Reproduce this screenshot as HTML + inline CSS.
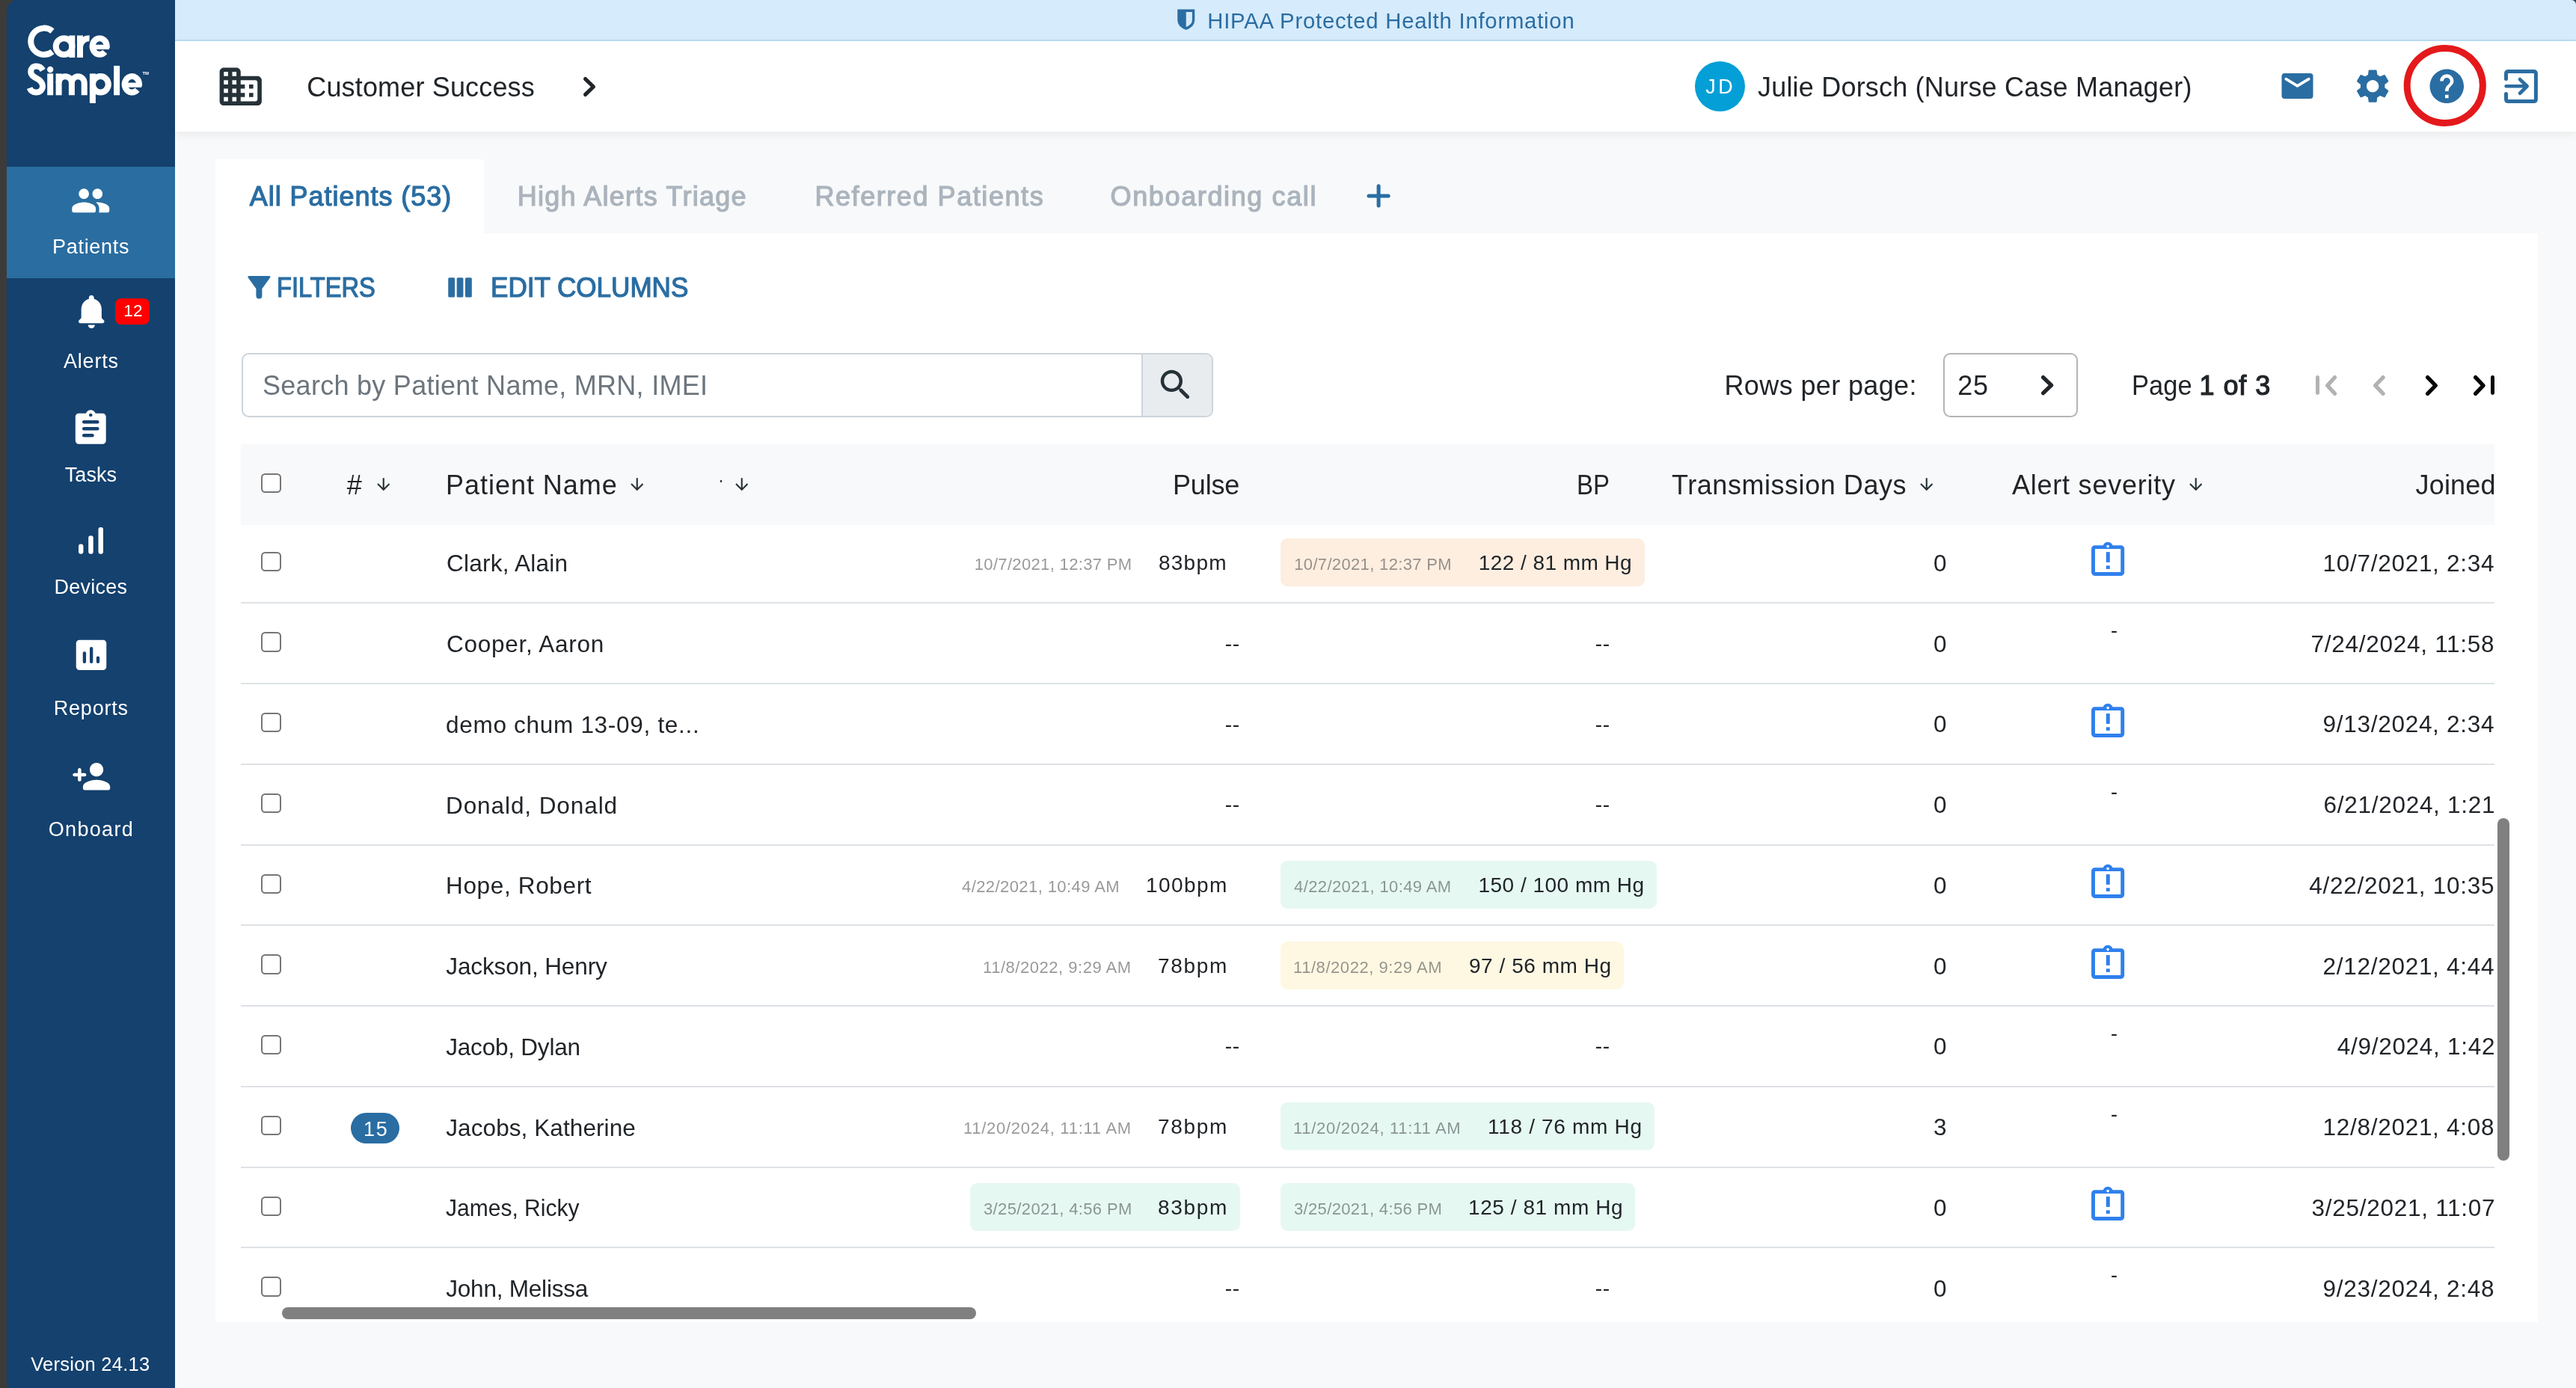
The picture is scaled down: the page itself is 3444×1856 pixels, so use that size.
<!DOCTYPE html>
<html lang="en"><head><meta charset="utf-8"><title>CareSimple - Patients</title>
<style>
html,body{margin:0;padding:0}
body{width:3444px;height:1856px;overflow:hidden;position:relative;background:#f8f9fa;font-family:"Liberation Sans", sans-serif;color:#212529}
div,svg,.t{position:absolute}
svg{overflow:visible}
.t{white-space:nowrap;line-height:1}
.layer{left:0;top:0;width:3444px;height:1856px;will-change:transform}
</style></head>
<body>
<div style="left:0px;top:0px;width:30px;height:1856px;background:#3c3b3a"></div>
<div style="left:3424px;top:0px;width:20px;height:20px;background:#3b3b3b"></div>
<div style="left:9px;top:-2px;width:225px;height:1858px;background:#14416e;border-top-left-radius:18px"></div>
<div style="left:9px;top:223px;width:225px;height:149px;background:#2a6da0"></div>
<div style="left:234px;top:0px;width:3210px;height:53px;background:#d6ebfb;border-bottom:2px solid #badcf6;border-top-right-radius:6px"></div>
<div style="left:234px;top:55px;width:3210px;height:121px;background:#fff;box-shadow:0 4px 12px rgba(0,0,0,.06)"></div>
<div style="left:288px;top:311.5px;width:3105px;height:1456px;background:#fff"></div>
<div style="left:288px;top:213px;width:359px;height:100px;background:#fff"></div>
<svg style="left:0px;top:0px;" width="234" height="150" viewBox="0 0 234 150"><g fill="none" stroke="#fff" stroke-width="8" stroke-linecap="butt" stroke-linejoin="round"><path d="M70.04,41.54 A17.7,17.7 0 1 0 70.04,69.06"/><circle cx="85.6" cy="62.1" r="10.9"/><path d="M96.3,47.4 V77"/><path d="M107,47.4 V77"/><path d="M107,63 A12.2,12 0 0 1 119.6,51.2"/><path d="M142.80,64.20 V62.00 A9.6,10.8 0 1 0 140.22,69.37"/><path stroke-width="6.3" d="M123.60,62.90 H146.00"/><path d="M57.2,94 C55,90 51.5,88.6 48.4,88.6 C43.5,88.6 41.2,92.2 41.2,95.8 C41.2,100.8 45,102.8 49,104.8 C54,107.3 57,110 57,115.3 C57,120.3 53,123.5 48.4,123.5 C44,123.5 41,121.3 39.6,117.6"/><path d="M67.2,98.4 V127.3"/><circle cx="67.2" cy="93" r="4.2" fill="#fff" stroke="none"/><path d="M78.6,98.4 V127.3"/><path d="M78.6,111 A8.65,8.8 0 0 1 95.9,111 V127.3"/><path d="M95.9,111 A8.4,8.8 0 0 1 112.7,111 V127.3"/><path d="M123.9,98.4 V138"/><ellipse cx="134.4" cy="112.8" rx="10.4" ry="10.7"/><path d="M156.1,87.9 V127.3"/><path d="M186.10,115.00 V112.80 A9.7,10.7 0 1 0 183.49,120.10"/><path stroke-width="6.3" d="M166.70,113.70 H189.30"/></g></svg>
<svg style="left:94.4px;top:241.15px;" width="54.5" height="54.5" viewBox="0 0 24 24"><path fill="#fff" d="M16 11c1.66 0 2.99-1.34 2.99-3S17.66 5 16 5c-1.66 0-3 1.34-3 3s1.34 3 3 3zm-8 0c1.66 0 2.99-1.34 2.99-3S9.66 5 8 5C6.34 5 5 6.34 5 8s1.34 3 3 3zm0 2c-2.33 0-7 1.17-7 3.5V18c0 .55.45 1 1 1h12c.55 0 1-.45 1-1v-1.5c0-2.33-4.67-3.5-7-3.5zm8 0c-.29 0-.62.02-.97.05.02.01.03.03.04.04 1.14.83 1.93 1.94 1.93 3.41V18c0 .35-.07.69-.18 1H22c.55 0 1-.45 1-1v-1.5c0-2.33-4.67-3.5-7-3.5z"/></svg>
<svg style="left:94.65px;top:389.3px;" width="54.5" height="54.5" viewBox="0 0 24 24"><path fill="#fff" d="M12 22c1.1 0 2-.9 2-2h-4c0 1.1.89 2 2 2zm6-6v-5c0-3.07-1.64-5.64-4.5-6.32V4c0-.83-.67-1.5-1.5-1.5s-1.5.67-1.5 1.5v.68C7.63 5.36 6 7.92 6 11v5l-1.29 1.29c-.63.63-.19 1.71.7 1.71h13.17c.89 0 1.34-1.08.71-1.71L18 16z"/></svg>
<div style="left:154px;top:399px;width:46px;height:34.75px;background:#ff0000;border-radius:8px"></div>
<svg style="left:94.15px;top:545.7px;" width="54.5" height="54.5" viewBox="0 0 24 24"><path fill="#fff" d="M19 3h-4.18C14.4 1.84 13.3 1 12 1c-1.3 0-2.4.84-2.82 2H5c-1.1 0-2 .9-2 2v14c0 1.1.9 2 2 2h14c1.1 0 2-.9 2-2V5c0-1.1-.9-2-2-2zm-7 0c.55 0 1 .45 1 1s-.45 1-1 1-1-.45-1-1 .45-1 1-1zm1 14H8c-.55 0-1-.45-1-1s.45-1 1-1h5c.55 0 1 .45 1 1s-.45 1-1 1zm3-4H8c-.55 0-1-.45-1-1s.45-1 1-1h8c.55 0 1 .45 1 1s-.45 1-1 1zm0-4H8c-.55 0-1-.45-1-1s.45-1 1-1h8c.55 0 1 .45 1 1s-.45 1-1 1z"/></svg>
<svg style="left:100px;top:700px;" width="50" height="45" viewBox="0 0 50 45"><g fill="#fff"><rect x="5" y="27.5" width="6.4" height="13.25" rx="3"/><rect x="18.2" y="16.25" width="6.5" height="24.5" rx="3"/><rect x="31.5" y="5" width="6.5" height="35.75" rx="3"/></g></svg>
<svg style="left:100px;top:850px;" width="50" height="50" viewBox="0 0 50 50"><rect x="1.75" y="5.75" width="40.5" height="40.25" rx="4.5" fill="#fff"/><g fill="#14416e"><rect x="10.75" y="21.25" width="4.3" height="15.75" rx="2.1"/><rect x="20" y="15" width="4.3" height="22" rx="2.1"/><rect x="28.85" y="27.5" width="4.3" height="9.5" rx="2.1"/></g></svg>
<svg style="left:94.7px;top:1010.9px;" width="54.5" height="54.5" viewBox="0 0 24 24"><path fill="#fff" d="M15 12c2.21 0 4-1.79 4-4s-1.79-4-4-4-4 1.79-4 4 1.79 4 4 4zm-9-2V8c0-.55-.45-1-1-1s-1 .45-1 1v2H2c-.55 0-1 .45-1 1s.45 1 1 1h2v2c0 .55.45 1 1 1s1-.45 1-1v-2h2c.55 0 1-.45 1-1s-.45-1-1-1H6zm9 4c-2.67 0-8 1.34-8 4v1c0 .55.45 1 1 1h14c.55 0 1-.45 1-1v-1c0-2.66-5.33-4-8-4z"/></svg>
<svg style="left:1570px;top:8px;" width="32" height="36" viewBox="0 0 32 36"><path fill="#2a6da2" d="M4.25,4.5 H27.25 V19 Q27.25,27.5 15.75,32 Q4.25,27.5 4.25,19 Z"/><path fill="#d6ebfb" d="M15.75,8 H23.9 V19 Q23.9,24.6 15.75,28.3 Z"/></svg>
<svg style="left:288.1px;top:82.06px;" width="67.5" height="67.5" viewBox="0 0 24 24"><path fill="#263238" d="M12 7V5c0-1.1-.9-2-2-2H4c-1.1 0-2 .9-2 2v14c0 1.1.9 2 2 2h16c1.1 0 2-.9 2-2V9c0-1.1-.9-2-2-2h-8zM6 19H4v-2h2v2zm0-4H4v-2h2v2zm0-4H4V9h2v2zm0-4H4V5h2v2zm4 12H8v-2h2v2zm0-4H8v-2h2v2zm0-4H8V9h2v2zm0-4H8V5h2v2zm9 12h-7v-2h2v-2h-2v-2h2v-2h-2V9h7c.55 0 1 .45 1 1v8c0 .55-.45 1-1 1zm-1-8h-2v2h2v-2zm0 4h-2v2h2v-2z"/></svg>
<svg style="left:779.8px;top:103px;" width="16" height="26" viewBox="0 0 16 26"><polyline points="2.6,2.6 13.4,13 2.6,23.4" fill="none" stroke="#212529" stroke-width="5.2" stroke-linecap="round" stroke-linejoin="round"/></svg>
<div style="left:2266px;top:82px;width:67px;height:67px;background:#039fd6;border-radius:50%"></div>
<svg style="left:3046px;top:94px;" width="50" height="42" viewBox="0 0 50 42"><rect x="4.5" y="4" width="42" height="34" rx="4" fill="#2a6da2"/><polyline points="10.3,11.6 25.5,20.9 40.8,11.6" fill="none" stroke="#fff" stroke-width="3.6" stroke-linecap="round" stroke-linejoin="round"/></svg>
<svg style="left:3145.35px;top:87.85px;" width="54.3" height="54.3" viewBox="0 0 24 24"><path fill="#2a6da2" d="M19.14 12.94c.04-.3.06-.61.06-.94 0-.32-.02-.64-.07-.94l2.03-1.58c.18-.14.23-.41.12-.61l-1.92-3.32c-.12-.22-.37-.29-.59-.22l-2.39.96c-.5-.38-1.03-.7-1.62-.94l-.36-2.54c-.04-.24-.24-.41-.48-.41h-3.84c-.24 0-.43.17-.47.41l-.36 2.54c-.59.24-1.13.57-1.62.94l-2.39-.96c-.22-.08-.47 0-.59.22L2.74 8.87c-.12.21-.08.47.12.61l2.03 1.58c-.05.3-.09.63-.09.94s.02.64.07.94l-2.03 1.58c-.18.14-.23.41-.12.61l1.92 3.32c.12.22.37.29.59.22l2.39-.96c.5.38 1.03.7 1.62.94l.36 2.54c.05.24.24.41.48.41h3.84c.24 0 .44-.17.47-.41l.36-2.54c.59-.24 1.13-.56 1.62-.94l2.39.96c.22.08.47 0 .59-.22l1.92-3.32c.12-.22.07-.47-.12-.61l-2.01-1.58zM12 15.6c-1.98 0-3.6-1.62-3.6-3.6s1.62-3.6 3.6-3.6 3.6 1.62 3.6 3.6-1.62 3.6-3.6 3.6z"/></svg>
<svg style="left:3244.2px;top:87.95px;" width="54.6" height="54.6" viewBox="0 0 24 24"><path fill="#2a6da2" d="M12 2C6.48 2 2 6.48 2 12s4.48 10 10 10 10-4.48 10-10S17.52 2 12 2zm1 17h-2v-2h2v2zm2.07-7.75l-.9.92C13.45 12.9 13 13.5 13 15h-2v-.5c0-1.1.45-2.1 1.17-2.83l1.24-1.26c.37-.36.59-.86.59-1.41 0-1.1-.9-2-2-2s-2 .9-2 2H8c0-2.21 1.79-4 4-4s4 1.79 4 4c0 .88-.36 1.68-.93 2.25z"/></svg>
<svg style="left:3208px;top:54px;" width="122" height="122" viewBox="0 0 122 122"><ellipse cx="60.75" cy="60.4" rx="50.6" ry="50" fill="none" stroke="#e4191c" stroke-width="9"/></svg>
<svg style="left:3340px;top:86px;" width="60" height="58" viewBox="0 0 60 58"><g fill="none" stroke="#2a6da2" stroke-linecap="round" stroke-linejoin="round"><path stroke-width="5" d="M10.5,19.4 V12.6 Q10.5,9.56 13.5,9.56 H47.4 Q50.4,9.56 50.4,12.6 V46.4 Q50.4,49.4 47.4,49.4 H13.5 Q10.5,49.4 10.5,46.4 V39.5"/><path stroke-width="4.5" d="M10.6,29.26 H37"/><path stroke-width="4.7" d="M29,20.1 L38.6,29.3 L29,38.7"/></g></svg>
<svg style="left:1823px;top:242px;" width="40" height="40" viewBox="0 0 40 40"><path d="M7,19.9 H33.2 M20.1,6.8 V33" fill="none" stroke="#2a6da2" stroke-width="5" stroke-linecap="round"/></svg>
<svg style="left:328px;top:366px;" width="38" height="38" viewBox="0 0 38 38"><path fill="#2a6da2" d="M5.4,2.9 H31.4 Q34.8,2.9 32.9,5.6 L22.4,20 V29.4 A4,4 0 0 1 14.4,29.4 V20 L3.9,5.6 Q2,2.9 5.4,2.9 Z"/></svg>
<svg style="left:596px;top:368px;" width="38" height="34" viewBox="0 0 38 34"><g fill="#2a6da2"><rect x="3.25" y="3.25" width="8.8" height="26.25" rx="1.6"/><rect x="14.7" y="3.25" width="8.7" height="26.25" rx="1.6"/><rect x="26" y="3.25" width="8.8" height="26.25" rx="1.6"/></g></svg>
<div style="left:322.5px;top:472px;width:1299.5px;height:86px;background:#fff;border:2px solid #cdd4db;border-radius:9.5px;box-sizing:border-box"></div>
<div style="left:1526px;top:474px;width:94px;height:82px;background:#e9ecef;border-left:2px solid #cdd4db;border-radius:0 7.5px 7.5px 0;box-sizing:border-box"></div>
<svg style="left:1545.3px;top:487.6px;" width="54" height="54" viewBox="0 0 24 24"><path fill="#263238" d="M15.5 14h-.79l-.28-.27C15.41 12.59 16 11.11 16 9.5 16 5.91 13.09 3 9.5 3S3 5.91 3 9.5 5.91 16 9.5 16c1.61 0 3.09-.59 4.23-1.57l.27.28v.79l4.25 4.25c.41.41 1.08.41 1.49 0 .41-.41.41-1.08 0-1.49L15.5 14zm-6 0C7.01 14 5 11.99 5 9.5S7.01 5 9.5 5 14 7.01 14 9.5 11.99 14 9.5 14z"/></svg>
<div style="left:2598.25px;top:472px;width:179.25px;height:86px;background:#fff;border:2px solid #b3b5b6;border-radius:9.5px;box-sizing:border-box"></div>
<svg style="left:2728.6px;top:501.7px;" width="16.2" height="26.3" viewBox="0 0 16.2 26.3"><polyline points="2.65,2.65 13.55,13.15 2.65,23.65" fill="none" stroke="#212529" stroke-width="5.3" stroke-linecap="round" stroke-linejoin="round"/></svg>
<div style="left:3096.3px;top:501.5px;width:4.7px;height:26.5px;background:#b2b2b2;border-radius:2.4px"></div>
<svg style="left:3108.9px;top:501.5px;" width="15.1" height="27" viewBox="0 0 15.1 27"><polyline points="12.45,2.65 2.65,13.5 12.45,24.35" fill="none" stroke="#b2b2b2" stroke-width="5.3" stroke-linecap="round" stroke-linejoin="round"/></svg>
<svg style="left:3172.5px;top:501.5px;" width="15.7" height="27" viewBox="0 0 15.7 27"><polyline points="13.05,2.65 2.65,13.5 13.05,24.35" fill="none" stroke="#b2b2b2" stroke-width="5.3" stroke-linecap="round" stroke-linejoin="round"/></svg>
<svg style="left:3243px;top:501.5px;" width="15.9" height="27" viewBox="0 0 15.9 27"><polyline points="2.65,2.65 13.25,13.5 2.65,24.35" fill="none" stroke="#050505" stroke-width="5.3" stroke-linecap="round" stroke-linejoin="round"/></svg>
<svg style="left:3307px;top:501.5px;" width="15.7" height="27" viewBox="0 0 15.7 27"><polyline points="2.65,2.65 13.05,13.5 2.65,24.35" fill="none" stroke="#050505" stroke-width="5.3" stroke-linecap="round" stroke-linejoin="round"/></svg>
<div style="left:3329.8px;top:501.5px;width:4.8px;height:26.5px;background:#050505;border-radius:2.4px"></div>
<div style="left:322px;top:594.25px;width:3013px;height:107.25px;background:#f8f9fa"></div>
<div style="left:322px;top:805.25px;width:3013px;height:2px;background:#dee2e6"></div>
<div style="left:322px;top:913px;width:3013px;height:2px;background:#dee2e6"></div>
<div style="left:322px;top:1020.75px;width:3013px;height:2px;background:#dee2e6"></div>
<div style="left:322px;top:1128.5px;width:3013px;height:2px;background:#dee2e6"></div>
<div style="left:322px;top:1236.25px;width:3013px;height:2px;background:#dee2e6"></div>
<div style="left:322px;top:1344px;width:3013px;height:2px;background:#dee2e6"></div>
<div style="left:322px;top:1451.75px;width:3013px;height:2px;background:#dee2e6"></div>
<div style="left:322px;top:1559.5px;width:3013px;height:2px;background:#dee2e6"></div>
<div style="left:322px;top:1667.25px;width:3013px;height:2px;background:#dee2e6"></div>
<div style="left:349.25px;top:632.5px;width:26.5px;height:26.4px;background:#fff;border:2px solid #767676;border-radius:5.5px;box-sizing:border-box"></div>
<div style="left:349.25px;top:737.5px;width:26.5px;height:26.4px;background:#fff;border:2px solid #767676;border-radius:5.5px;box-sizing:border-box"></div>
<div style="left:349.25px;top:845.25px;width:26.5px;height:26.4px;background:#fff;border:2px solid #767676;border-radius:5.5px;box-sizing:border-box"></div>
<div style="left:349.25px;top:953px;width:26.5px;height:26.4px;background:#fff;border:2px solid #767676;border-radius:5.5px;box-sizing:border-box"></div>
<div style="left:349.25px;top:1060.75px;width:26.5px;height:26.4px;background:#fff;border:2px solid #767676;border-radius:5.5px;box-sizing:border-box"></div>
<div style="left:349.25px;top:1168.5px;width:26.5px;height:26.4px;background:#fff;border:2px solid #767676;border-radius:5.5px;box-sizing:border-box"></div>
<div style="left:349.25px;top:1276.25px;width:26.5px;height:26.4px;background:#fff;border:2px solid #767676;border-radius:5.5px;box-sizing:border-box"></div>
<div style="left:349.25px;top:1384px;width:26.5px;height:26.4px;background:#fff;border:2px solid #767676;border-radius:5.5px;box-sizing:border-box"></div>
<div style="left:349.25px;top:1491.75px;width:26.5px;height:26.4px;background:#fff;border:2px solid #767676;border-radius:5.5px;box-sizing:border-box"></div>
<div style="left:349.25px;top:1599.5px;width:26.5px;height:26.4px;background:#fff;border:2px solid #767676;border-radius:5.5px;box-sizing:border-box"></div>
<div style="left:349.25px;top:1707.25px;width:26.5px;height:26.4px;background:#fff;border:2px solid #767676;border-radius:5.5px;box-sizing:border-box"></div>
<svg style="left:500.25px;top:635.25px;" width="25.5" height="25.5" viewBox="0 0 24 24"><path fill="#263238" d="M20 12l-1.41-1.41L13 16.17V4h-2v12.17l-5.58-5.59L4 12l8 8 8-8z"/></svg>
<svg style="left:839px;top:635.25px;" width="25.5" height="25.5" viewBox="0 0 24 24"><path fill="#263238" d="M20 12l-1.41-1.41L13 16.17V4h-2v12.17l-5.58-5.59L4 12l8 8 8-8z"/></svg>
<svg style="left:979px;top:635.25px;" width="25.5" height="25.5" viewBox="0 0 24 24"><path fill="#263238" d="M20 12l-1.41-1.41L13 16.17V4h-2v12.17l-5.58-5.59L4 12l8 8 8-8z"/></svg>
<svg style="left:2562.75px;top:635.25px;" width="25.5" height="25.5" viewBox="0 0 24 24"><path fill="#263238" d="M20 12l-1.41-1.41L13 16.17V4h-2v12.17l-5.58-5.59L4 12l8 8 8-8z"/></svg>
<svg style="left:2922.75px;top:635.25px;" width="25.5" height="25.5" viewBox="0 0 24 24"><path fill="#263238" d="M20 12l-1.41-1.41L13 16.17V4h-2v12.17l-5.58-5.59L4 12l8 8 8-8z"/></svg>
<div style="left:962.5px;top:641.75px;width:2px;height:3.25px;background:#263238"></div>
<div style="left:1712px;top:720px;width:486.75px;height:64px;background:#fdeee0;border-radius:9px"></div>
<div style="left:1712px;top:1151px;width:503px;height:64px;background:#e6f8f2;border-radius:9px"></div>
<div style="left:1712px;top:1258.75px;width:459px;height:64px;background:#fef8e3;border-radius:9px"></div>
<div style="left:1712px;top:1474.25px;width:500px;height:64px;background:#e6f8f2;border-radius:9px"></div>
<div style="left:1296.5px;top:1582px;width:361.5px;height:64px;background:#e6f8f2;border-radius:9px"></div>
<div style="left:1712px;top:1582px;width:474px;height:64px;background:#e6f8f2;border-radius:9px"></div>
<div style="left:468.75px;top:1488px;width:65.5px;height:40.75px;background:#2a6da2;border-radius:21px"></div>
<svg style="left:2792px;top:723px;" width="52" height="50" viewBox="0 0 52 50"><circle cx="26.1" cy="8.5" r="6.8" fill="#2f80ed"/><rect x="6.53" y="8.65" width="39.18" height="35.8" rx="2.1" fill="#fff" stroke="#2f80ed" stroke-width="4.9"/><circle cx="26.1" cy="7.6" r="1.8" fill="#fff"/><rect x="23.8" y="15.1" width="5" height="13.8" fill="#2f80ed"/><rect x="23.8" y="33.3" width="5" height="4.6" fill="#2f80ed"/></svg>
<svg style="left:2792px;top:938.5px;" width="52" height="50" viewBox="0 0 52 50"><circle cx="26.1" cy="8.5" r="6.8" fill="#2f80ed"/><rect x="6.53" y="8.65" width="39.18" height="35.8" rx="2.1" fill="#fff" stroke="#2f80ed" stroke-width="4.9"/><circle cx="26.1" cy="7.6" r="1.8" fill="#fff"/><rect x="23.8" y="15.1" width="5" height="13.8" fill="#2f80ed"/><rect x="23.8" y="33.3" width="5" height="4.6" fill="#2f80ed"/></svg>
<svg style="left:2792px;top:1154px;" width="52" height="50" viewBox="0 0 52 50"><circle cx="26.1" cy="8.5" r="6.8" fill="#2f80ed"/><rect x="6.53" y="8.65" width="39.18" height="35.8" rx="2.1" fill="#fff" stroke="#2f80ed" stroke-width="4.9"/><circle cx="26.1" cy="7.6" r="1.8" fill="#fff"/><rect x="23.8" y="15.1" width="5" height="13.8" fill="#2f80ed"/><rect x="23.8" y="33.3" width="5" height="4.6" fill="#2f80ed"/></svg>
<svg style="left:2792px;top:1261.75px;" width="52" height="50" viewBox="0 0 52 50"><circle cx="26.1" cy="8.5" r="6.8" fill="#2f80ed"/><rect x="6.53" y="8.65" width="39.18" height="35.8" rx="2.1" fill="#fff" stroke="#2f80ed" stroke-width="4.9"/><circle cx="26.1" cy="7.6" r="1.8" fill="#fff"/><rect x="23.8" y="15.1" width="5" height="13.8" fill="#2f80ed"/><rect x="23.8" y="33.3" width="5" height="4.6" fill="#2f80ed"/></svg>
<svg style="left:2792px;top:1585px;" width="52" height="50" viewBox="0 0 52 50"><circle cx="26.1" cy="8.5" r="6.8" fill="#2f80ed"/><rect x="6.53" y="8.65" width="39.18" height="35.8" rx="2.1" fill="#fff" stroke="#2f80ed" stroke-width="4.9"/><circle cx="26.1" cy="7.6" r="1.8" fill="#fff"/><rect x="23.8" y="15.1" width="5" height="13.8" fill="#2f80ed"/><rect x="23.8" y="33.3" width="5" height="4.6" fill="#2f80ed"/></svg>
<div style="left:3339px;top:1094px;width:16px;height:457.5px;background:#808080;border-radius:8px"></div>
<div style="left:377px;top:1748px;width:928px;height:16px;background:#808080;border-radius:8px"></div>
<div class="layer">
<span class="t" style="left:70.00px;top:317px;font-size:27px;color:#ffffff;letter-spacing:0.706px;">Patients</span>
<span class="t" style="left:85.00px;top:470px;font-size:27px;color:#ffffff;letter-spacing:0.797px;">Alerts</span>
<span class="t" style="left:86.75px;top:622px;font-size:27px;color:#ffffff;letter-spacing:0.058px;">Tasks</span>
<span class="t" style="left:72.50px;top:772px;font-size:27px;color:#ffffff;letter-spacing:0.245px;">Devices</span>
<span class="t" style="left:71.75px;top:934px;font-size:27px;color:#ffffff;letter-spacing:0.785px;">Reports</span>
<span class="t" style="left:64.75px;top:1096px;font-size:27px;color:#ffffff;letter-spacing:1.324px;">Onboard</span>
<span class="t" style="left:41.25px;top:1812px;font-size:25.5px;color:#ffffff;letter-spacing:0.248px;">Version 24.13</span>
<span class="t" style="left:165.25px;top:405px;font-size:22.5px;color:#ffffff;letter-spacing:0.237px;">12</span>
<span class="t" style="left:190.50px;top:95px;font-size:6px;font-weight:700;color:#ffffff;letter-spacing:-0.165px;">TM</span>
<span class="t" style="left:1614.25px;top:14px;font-size:29.25px;color:#2a6da2;letter-spacing:0.787px;">HIPAA Protected Health Information</span>
<span class="t" style="left:410.25px;top:99px;font-size:36px;letter-spacing:0.160px;">Customer Success</span>
<span class="t" style="left:2350.00px;top:99px;font-size:36px;letter-spacing:0.196px;">Julie Dorsch (Nurse Case Manager)</span>
<span class="t" style="left:2280.20px;top:103px;font-size:27px;color:#ffffff;">J</span>
<span class="t" style="left:2297.20px;top:103px;font-size:27px;color:#ffffff;">D</span>
<span class="t" style="left:333.75px;top:245px;font-size:36px;color:#2a6da2;letter-spacing:0.961px;-webkit-text-stroke:1.22px #2a6da2;">All Patients (53)</span>
<span class="t" style="left:691.75px;top:245px;font-size:36px;color:#abb4bd;letter-spacing:1.280px;-webkit-text-stroke:1.22px #abb4bd;">High Alerts Triage</span>
<span class="t" style="left:1089.40px;top:245px;font-size:36px;color:#abb4bd;letter-spacing:1.572px;-webkit-text-stroke:1.22px #abb4bd;">Referred Patients</span>
<span class="t" style="left:1484.60px;top:245px;font-size:36px;color:#abb4bd;letter-spacing:1.624px;-webkit-text-stroke:1.22px #abb4bd;">Onboarding call</span>
<span class="t" style="left:369.94px;top:367px;font-size:36px;color:#2a6da2;-webkit-text-stroke:1.22px #2a6da2;transform:scaleX(0.9063);transform-origin:0 0;">FILTERS</span>
<span class="t" style="left:655.55px;top:367px;font-size:36px;color:#2a6da2;-webkit-text-stroke:1.22px #2a6da2;transform:scaleX(0.9739);transform-origin:0 0;">EDIT COLUMNS</span>
<span class="t" style="left:351.00px;top:498px;font-size:36px;color:#6c757d;letter-spacing:0.275px;">Search by Patient Name, MRN, IMEI</span>
<span class="t" style="left:2305.50px;top:498px;font-size:36px;letter-spacing:0.374px;">Rows per page:</span>
<span class="t" style="left:2617.25px;top:498px;font-size:36px;letter-spacing:0.729px;">25</span>
<span class="t" style="left:2849.83px;top:498px;font-size:36px;transform:scaleX(0.9592);transform-origin:0 0;">Page</span>
<span class="t" style="left:2940.50px;top:498px;font-size:36px;letter-spacing:0.940px;-webkit-text-stroke:1.22px #212529;">1 of 3</span>
<span class="t" style="left:463.75px;top:631px;font-size:36px;">#</span>
<span class="t" style="left:596.00px;top:631px;font-size:36px;letter-spacing:0.969px;">Patient Name</span>
<span class="t" style="left:1568.00px;top:631px;font-size:36px;letter-spacing:-0.195px;">Pulse</span>
<span class="t" style="left:2108.17px;top:631px;font-size:36px;transform:scaleX(0.9164);transform-origin:0 0;">BP</span>
<span class="t" style="left:2235.00px;top:631px;font-size:36px;letter-spacing:0.548px;">Transmission Days</span>
<span class="t" style="left:2690.00px;top:631px;font-size:36px;letter-spacing:0.765px;">Alert severity</span>
<span class="t" style="left:3229.50px;top:631px;font-size:36px;letter-spacing:0.188px;">Joined</span>
<span class="t" style="left:597.00px;top:738px;font-size:31.5px;letter-spacing:0.247px;">Clark, Alain</span>
<span class="t" style="left:597.00px;top:846px;font-size:31.5px;letter-spacing:0.740px;">Cooper, Aaron</span>
<span class="t" style="left:596.00px;top:954px;font-size:31.5px;letter-spacing:0.706px;">demo chum 13-09, te...</span>
<span class="t" style="left:596.00px;top:1062px;font-size:31.5px;letter-spacing:0.921px;">Donald, Donald</span>
<span class="t" style="left:596.00px;top:1169px;font-size:31.5px;letter-spacing:0.654px;">Hope, Robert</span>
<span class="t" style="left:596.25px;top:1277px;font-size:31.5px;letter-spacing:-0.122px;">Jackson, Henry</span>
<span class="t" style="left:596.25px;top:1385px;font-size:31.5px;letter-spacing:-0.211px;">Jacob, Dylan</span>
<span class="t" style="left:596.25px;top:1493px;font-size:31.5px;letter-spacing:0.085px;">Jacobs, Katherine</span>
<span class="t" style="left:596.25px;top:1600px;font-size:31.5px;transform:scaleX(0.9532);transform-origin:0 0;">James, Ricky</span>
<span class="t" style="left:596.25px;top:1708px;font-size:31.5px;letter-spacing:-0.214px;">John, Melissa</span>
<span class="t" style="left:1302.75px;top:744px;font-size:22px;color:rgba(33,37,41,.47);letter-spacing:0.337px;">10/7/2021, 12:37 PM</span>
<span class="t" style="left:1549.00px;top:739px;font-size:28px;letter-spacing:1.240px;">83bpm</span>
<span class="t" style="left:1730.25px;top:744px;font-size:22px;color:rgba(33,37,41,.47);letter-spacing:0.337px;">10/7/2021, 12:37 PM</span>
<span class="t" style="left:1976.75px;top:739px;font-size:28px;letter-spacing:0.433px;">122 / 81 mm Hg</span>
<span class="t" style="left:2585.10px;top:738px;font-size:31.5px;">0</span>
<span class="t" style="left:3105.50px;top:738px;font-size:31.5px;letter-spacing:0.720px;">10/7/2021, 2:34</span>
<span class="t" style="left:1637.75px;top:847px;font-size:28px;letter-spacing:0.676px;">--</span>
<span class="t" style="left:2132.75px;top:847px;font-size:28px;letter-spacing:0.676px;">--</span>
<span class="t" style="left:2585.10px;top:846px;font-size:31.5px;">0</span>
<span class="t" style="left:3089.59px;top:846px;font-size:31.5px;letter-spacing:0.720px;">7/24/2024, 11:58</span>
<span class="t" style="left:2822.00px;top:830px;font-size:27px;">-</span>
<span class="t" style="left:1637.75px;top:955px;font-size:28px;letter-spacing:0.676px;">--</span>
<span class="t" style="left:2132.75px;top:955px;font-size:28px;letter-spacing:0.676px;">--</span>
<span class="t" style="left:2585.10px;top:953px;font-size:31.5px;">0</span>
<span class="t" style="left:3105.50px;top:953px;font-size:31.5px;letter-spacing:0.720px;">9/13/2024, 2:34</span>
<span class="t" style="left:1637.75px;top:1062px;font-size:28px;letter-spacing:0.676px;">--</span>
<span class="t" style="left:2132.75px;top:1062px;font-size:28px;letter-spacing:0.676px;">--</span>
<span class="t" style="left:2585.10px;top:1061px;font-size:31.5px;">0</span>
<span class="t" style="left:3106.50px;top:1061px;font-size:31.5px;letter-spacing:0.720px;">6/21/2024, 1:21</span>
<span class="t" style="left:2822.00px;top:1046px;font-size:27px;">-</span>
<span class="t" style="left:1286.00px;top:1175px;font-size:22px;color:rgba(33,37,41,.47);letter-spacing:0.420px;">4/22/2021, 10:49 AM</span>
<span class="t" style="left:1532.00px;top:1170px;font-size:28px;letter-spacing:1.428px;">100bpm</span>
<span class="t" style="left:1730.00px;top:1175px;font-size:22px;color:rgba(33,37,41,.47);letter-spacing:0.392px;">4/22/2021, 10:49 AM</span>
<span class="t" style="left:1976.50px;top:1170px;font-size:28px;letter-spacing:0.486px;">150 / 100 mm Hg</span>
<span class="t" style="left:2585.10px;top:1169px;font-size:31.5px;">0</span>
<span class="t" style="left:3087.26px;top:1169px;font-size:31.5px;letter-spacing:0.720px;">4/22/2021, 10:35</span>
<span class="t" style="left:1314.00px;top:1283px;font-size:22px;color:rgba(33,37,41,.47);letter-spacing:0.525px;">11/8/2022, 9:29 AM</span>
<span class="t" style="left:1548.00px;top:1278px;font-size:28px;letter-spacing:1.678px;">78bpm</span>
<span class="t" style="left:1729.00px;top:1283px;font-size:22px;color:rgba(33,37,41,.47);letter-spacing:0.555px;">11/8/2022, 9:29 AM</span>
<span class="t" style="left:1964.00px;top:1278px;font-size:28px;letter-spacing:0.537px;">97 / 56 mm Hg</span>
<span class="t" style="left:2585.10px;top:1277px;font-size:31.5px;">0</span>
<span class="t" style="left:3105.50px;top:1277px;font-size:31.5px;letter-spacing:0.720px;">2/12/2021, 4:44</span>
<span class="t" style="left:1637.75px;top:1385px;font-size:28px;letter-spacing:0.676px;">--</span>
<span class="t" style="left:2132.75px;top:1385px;font-size:28px;letter-spacing:0.676px;">--</span>
<span class="t" style="left:2585.10px;top:1384px;font-size:31.5px;">0</span>
<span class="t" style="left:3124.73px;top:1384px;font-size:31.5px;letter-spacing:0.720px;">4/9/2024, 1:42</span>
<span class="t" style="left:2822.00px;top:1369px;font-size:27px;">-</span>
<span class="t" style="left:1288.00px;top:1498px;font-size:22px;color:rgba(33,37,41,.47);letter-spacing:0.722px;">11/20/2024, 11:11 AM</span>
<span class="t" style="left:1548.00px;top:1493px;font-size:28px;letter-spacing:1.678px;">78bpm</span>
<span class="t" style="left:1729.00px;top:1498px;font-size:22px;color:rgba(33,37,41,.47);letter-spacing:0.696px;">11/20/2024, 11:11 AM</span>
<span class="t" style="left:1989.00px;top:1493px;font-size:28px;letter-spacing:0.689px;">118 / 76 mm Hg</span>
<span class="t" style="left:2585.10px;top:1492px;font-size:31.5px;">3</span>
<span class="t" style="left:3105.50px;top:1492px;font-size:31.5px;letter-spacing:0.720px;">12/8/2021, 4:08</span>
<span class="t" style="left:2822.00px;top:1477px;font-size:27px;">-</span>
<span class="t" style="left:1315.00px;top:1606px;font-size:22px;color:rgba(33,37,41,.47);letter-spacing:0.371px;">3/25/2021, 4:56 PM</span>
<span class="t" style="left:1548.00px;top:1601px;font-size:28px;letter-spacing:1.678px;">83bpm</span>
<span class="t" style="left:1730.00px;top:1606px;font-size:22px;color:rgba(33,37,41,.47);letter-spacing:0.341px;">3/25/2021, 4:56 PM</span>
<span class="t" style="left:1963.00px;top:1601px;font-size:28px;letter-spacing:0.567px;">125 / 81 mm Hg</span>
<span class="t" style="left:2585.10px;top:1600px;font-size:31.5px;">0</span>
<span class="t" style="left:3090.59px;top:1600px;font-size:31.5px;letter-spacing:0.720px;">3/25/2021, 11:07</span>
<span class="t" style="left:1637.75px;top:1709px;font-size:28px;letter-spacing:0.676px;">--</span>
<span class="t" style="left:2132.75px;top:1709px;font-size:28px;letter-spacing:0.676px;">--</span>
<span class="t" style="left:2585.10px;top:1708px;font-size:31.5px;">0</span>
<span class="t" style="left:3105.50px;top:1708px;font-size:31.5px;letter-spacing:0.720px;">9/23/2024, 2:48</span>
<span class="t" style="left:2822.00px;top:1692px;font-size:27px;">-</span>
<span class="t" style="left:486.00px;top:1497px;font-size:27px;color:#ffffff;letter-spacing:1.734px;">15</span>
</div>
</body></html>
